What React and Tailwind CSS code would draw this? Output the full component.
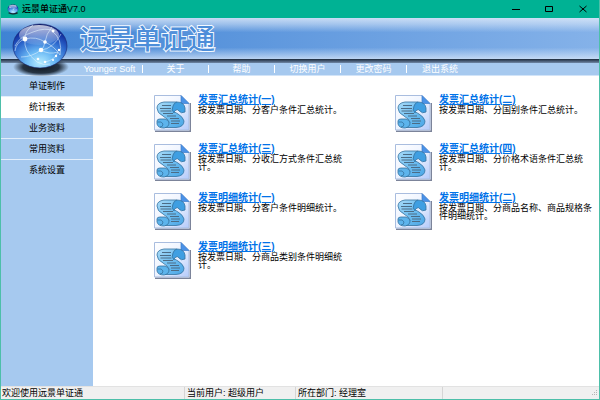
const MENU = ["Younger Soft", "关于", "帮助", "切换用户", "更改密码", "退出系统"];

const SIDEBAR = ["单证制作", "统计报表", "业务资料", "常用资料", "系统设置"];

const REPORTS = [
  { title: "发票汇总统计(一)", text: "按发票日期、分客户条件汇总统计。" },
  { title: "发票汇总统计(二)", text: "按发票日期、分国别条件汇总统计。" },
  { title: "发票汇总统计(三)", text: "按发票日期、分收汇方式条件汇总统计。" },
  { title: "发票汇总统计(四)", text: "按发票日期、分价格术语条件汇总统计。" },
  { title: "发票明细统计(一)", text: "按发票日期、分客户条件明细统计。" },
  { title: "发票明细统计(二)", text: "按发票日期、分商品名称、商品规格条件明细统计。" },
  { title: "发票明细统计(三)", text: "按发票日期、分商品类别条件明细统计。" },
];

function Globe({ className }) {
  return (
    <svg viewBox="0 0 60 56" className={className} aria-hidden="true">
      <defs>
        <radialGradient id="ball" cx="0.5" cy="0.88" r="0.88">
          <stop offset="0" stopColor="#b5ecff" />
          <stop offset="0.3" stopColor="#6bb9f5" />
          <stop offset="0.62" stopColor="#2c67cd" />
          <stop offset="0.88" stopColor="#102b9b" />
          <stop offset="1" stopColor="#08135f" />
        </radialGradient>
        <linearGradient id="gloss" x1="0" y1="0" x2="0" y2="1">
          <stop offset="0" stopColor="#fff" stopOpacity="0.75" />
          <stop offset="1" stopColor="#fff" stopOpacity="0.08" />
        </linearGradient>
        <radialGradient id="shade">
          <stop offset="0" stopColor="#101820" />
          <stop offset="0.65" stopColor="#17222f" stopOpacity="0.9" />
          <stop offset="1" stopColor="#17222f" stopOpacity="0" />
        </radialGradient>
      </defs>
      <ellipse cx="31" cy="46" rx="28" ry="9.500" fill="url(#shade)" />
      <ellipse cx="30" cy="25" rx="27" ry="22" fill="url(#ball)" stroke="#17256e" strokeWidth="0.6" />
      <ellipse cx="29" cy="14" rx="20" ry="10" fill="url(#gloss)" />
      <g fill="none" stroke="#e6f6ff" strokeWidth="0.7" opacity="0.8">
        <path d="M5 25Q10 15 23 11Q35 6 45 10" />
        <path d="M15 18Q13 30 27 41Q34 45 40 43" />
        <path d="M23 4Q14 11 15 18Q26 15 35 21Q45 26 50 34" />
        <path d="M42 6Q36 13 35 21Q34 27 31 29Q22 36 11 36" />
        <path d="M31 29Q43 28 51 13" />
        <path d="M31 29Q39 34 48 31Q45 39 35 41" />
        <path d="M42 10Q53 18 50 34" />
        <path d="M15 18Q6 21 5 30" />
      </g>
      <g fill="#fff">
        <circle cx="15" cy="18" r="2.4" />
        <circle cx="31" cy="29" r="2.3" />
        <circle cx="35" cy="21" r="1.8" />
        <circle cx="43" cy="10" r="1.4" />
        <circle cx="28" cy="38" r="1.3" />
        <circle cx="35" cy="41" r="1.3" />
        <circle cx="46" cy="35" r="1.2" />
        <circle cx="49" cy="29" r="1.2" />
        <circle cx="43" cy="39" r="1" />
      </g>
    </svg>
  );
}

function ScrollIcon() {
  return (
    <svg viewBox="0 0 38 38" className="w-[38px] h-[38px] shrink-0" aria-hidden="true">
      <defs>
        <linearGradient id="page" x1="0" y1="0" x2="1" y2="1">
          <stop offset="0" stopColor="#fff" />
          <stop offset="0.5" stopColor="#edf3ff" />
          <stop offset="1" stopColor="#b4cafa" />
        </linearGradient>
        <linearGradient id="roll" x1="0" y1="0" x2="1" y2="1">
          <stop offset="0" stopColor="#a9dbf8" />
          <stop offset="0.5" stopColor="#6fbef0" />
          <stop offset="1" stopColor="#4aa6e6" />
        </linearGradient>
      </defs>
      <path d="M2 37.300H37.300V9" fill="none" stroke="#7c849a" strokeWidth="1.4" />
      <path d="M1.500 1.500H28L36 9.500V36H1.500Z" fill="url(#page)" stroke="#a9bddf" />
      <path d="M28 1.500V9.500H36Z" fill="#4a92e7" stroke="#3c7dca" strokeWidth="0.7" />
      <g stroke="#35729f" strokeWidth="0.8" strokeLinejoin="round">
        {/* sheet */}
        <path
          d="M24 8H11Q4 9 4 14Q4 19 10 22Q15 25 16 28Q16 31 12 33.500H23Q31 33 31 27Q30 23 25 20Q20 18 20 15Q20 11 24 8Z"
          fill="url(#roll)"
        />
        {/* top curl */}
        <path d="M24 8Q31 8 32 14V18Q28 20 26 17Q25 15 23 16Q21 17 21 19Q18 16 20 12Q21 8.500 24 8Z" fill="#3f9fe2" />
        {/* bottom curl */}
        <path d="M4 27Q4 25 7 25H12Q16 26 16 29Q16 33 11 34Q5 34 4 30Z" fill="#5db4ec" />
        <path d="M4.500 28Q9 27 10 30Q10 33 7 33" fill="none" />
      </g>
      <path
        d="M9 11.500H18M7 14.500H18M7.500 17H18.500M10 19.500H20M14 22H23M17 24.500H26M18 27H27M18 29.500H26"
        stroke="#4c6c86"
        strokeWidth="1"
      />
    </svg>
  );
}

function TitleBar() {
  return (
    <div className="flex items-center h-[18px] bg-[#00b294] pl-[6px] text-black">
      <Globe className="w-[12px] h-[11px]" />
      <span className="ml-[3px] text-[9px] leading-[12px] font-medium">远景单证通V7.0</span>
      <div className="flex ml-auto h-full">
        <button aria-label="最小化" className="w-[33px] flex items-center justify-center">
          <svg viewBox="0 0 8 8" className="w-[8px] h-[8px]" stroke="currentColor">
            <path d="M0 4.500H8" />
          </svg>
        </button>
        <button aria-label="最大化" className="w-[34px] flex items-center justify-center">
          <svg viewBox="0 0 8 8" className="w-[8px] h-[8px]" stroke="currentColor" fill="none">
            <path d="M0.500 1.500H7.500V6.500H0.500Z" />
          </svg>
        </button>
        <button aria-label="关闭" className="w-[33px] flex items-center justify-center">
          <svg viewBox="0 0 8 8" className="w-[8px] h-[8px]" stroke="currentColor" fill="none">
            <path d="M0.500 1L7.500 7M7.500 1L0.500 7" />
          </svg>
        </button>
      </div>
    </div>
  );
}

function Report({ title, text }) {
  return (
    <li className="flex gap-[7px]">
      <ScrollIcon />
      <div className="min-w-0">
        <a
          href="#report"
          className="block w-fit text-[10px] leading-[12px] font-bold text-[#0072e8] underline underline-offset-1"
        >
          {title}
        </a>
        <p className="text-[9px] leading-[8px] text-black">{text}</p>
      </div>
    </li>
  );
}

export default function App() {
  return (
    <div className="min-h-screen flex flex-col border-x border-b border-[#4dbfa9] bg-white font-['Liberation_Sans','Noto_Sans_CJK_SC',sans-serif]">
      <TitleBar />

      {/* Banner */}
      <header className="relative">
        <div className="bg-linear-to-r from-[#3f83d4] to-[#85b2e9]">
          <div className="h-[41px] pl-[79px] pt-[2px] flex items-center bg-[linear-gradient(to_bottom,rgba(225,236,250,0.8)_0%,rgba(225,236,250,0.5)_15%,rgba(225,236,250,0)_35%,rgba(225,236,250,0)_72%,rgba(225,236,250,0.7)_100%)]">
            <h1 className="text-[27px] leading-[36px] font-medium text-[#4d8ed9] [-webkit-text-stroke:2px_#f4f9ff] [paint-order:stroke_fill]">
              远景单证通
            </h1>
          </div>
        </div>
        <div className="h-[4px] bg-linear-to-b from-[#1d2b3e] to-[#7189a8]" />
        <nav className="flex items-center h-[13px] pl-[76px] bg-[#a6c9ef] border-b border-[#d2e4f8]">
          {MENU.map((item) => (
            <a
              key={item}
              href="#menu"
              className="w-[66px] h-[8px] flex items-center justify-center border-r border-white last:border-r-0 text-[9px] leading-[8px] text-white whitespace-nowrap"
            >
              {item}
            </a>
          ))}
        </nav>
        <Globe className="absolute left-[9px] top-[3px] w-[60px] h-[56px]" />
      </header>

      <div className="flex flex-1">
        <aside className="w-[92px] shrink-0 bg-[#a6c9ef]">
          {SIDEBAR.map((item) => (
            <button
              key={item}
              className={`block w-full h-[21px] text-[9px] leading-[12px] text-black text-center border-b ${
                item === "统计报表" ? "bg-white border-white" : "border-[#e2eefb] last:border-transparent"
              }`}
            >
              {item}
            </button>
          ))}
        </aside>

        <main className="flex-1 pt-[18px] pl-[60px] pr-[4px]">
          <ul className="grid grid-cols-2 gap-x-[40px] gap-y-[11px]">
            {REPORTS.map((r) => (
              <Report key={r.title} {...r} />
            ))}
          </ul>
        </main>
      </div>

      {/* Status bar */}
      <footer className="flex items-center h-[13px] bg-[#f0f0f0] border-t border-[#e2e2e2] text-[9px] leading-[12px] text-black">
        <span className="w-[184px] pl-px border-r border-[#d5d5d5]">欢迎使用远景单证通</span>
        <span className="w-[111px] pl-[2px] border-r border-[#d5d5d5]">当前用户: 超级用户</span>
        <span className="w-[147px] pl-[2px] border-r border-[#d5d5d5]">所在部门: 经理室</span>
        <svg viewBox="0 0 8 8" className="ml-auto w-[8px] h-[8px]" fill="#b5b5b5" aria-hidden="true">
          <path d="M5 1h1v1h-1zM3 3h1v1h-1zM5 3h1v1h-1zM1 5h1v1h-1zM3 5h1v1h-1zM5 5h1v1h-1z" />
        </svg>
      </footer>
    </div>
  );
}
